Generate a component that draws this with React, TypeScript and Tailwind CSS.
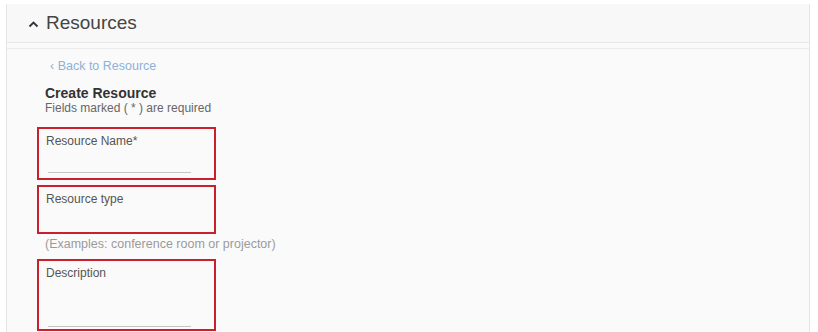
export default function App() {
	return (
		<div className="w-[818px] h-[332px] bg-white pt-[4px] overflow-hidden font-['Liberation_Sans',Arial,sans-serif]">
			<div className="ml-[6px] w-[804px] h-[340px] border-l border-r border-[#e6e6e6] bg-[#fafafa]">
				{/* header */}
				<div className="h-[38px] flex items-center pl-[21px] bg-[#f8f8f8]">
					<svg width="11" height="8" viewBox="0 0 11 8" className="mr-[7px] mt-[2px]">
						<path d="M1.5 6.5 L5.5 2.5 L9.5 6.5" fill="none" stroke="#333" strokeWidth="1.8" />
					</svg>
					<span className="text-[19px] text-[#444]">Resources</span>
				</div>
				<div className="border-t border-[#e8e8e8]" />
				<div className="h-[5px]" />
				<div className="border-t border-[#ececec]" />
				<div className="pl-[30px] pt-[9px]">
					<a className="block pl-[13px] text-[12.5px] leading-[16px] text-[#8eb0d9]">‹ Back to Resource</a>
					<h3 className="mt-[11px] pl-[8px] text-[14px] leading-[16px] font-bold text-[#333]">Create Resource</h3>
					<p className="pl-[8px] text-[12px] leading-[15px] text-[#666]">Fields marked ( * ) are required</p>
					<div className="mt-[11px] w-[179px] h-[53px] border-2 border-[#c8202c] pt-[5px] pl-[7px]">
						<div className="text-[12px] leading-[14px] text-[#555]">Resource Name*</div>
						<div className="mt-[24px] ml-[2px] w-[143px] border-t border-[#c4c4c4]" />
					</div>
					<div className="mt-[5px] w-[179px] h-[49px] border-2 border-[#c8202c] pt-[5px] pl-[7px]">
						<div className="text-[12px] leading-[14px] text-[#555]">Resource type</div>
					</div>
					<p className="mt-[3px] pl-[8px] text-[12.5px] leading-[15px] text-[#9a9a9a]">
						(Examples: conference room or projector)
					</p>
					<div className="mt-[7px] w-[179px] h-[72px] border-2 border-[#c8202c] pt-[5px] pl-[7px]">
						<div className="text-[12px] leading-[14px] text-[#555]">Description</div>
						<div className="mt-[46px] ml-[2px] w-[143px] border-t border-[#c4c4c4]" />
					</div>
				</div>
			</div>
		</div>
	);
}
